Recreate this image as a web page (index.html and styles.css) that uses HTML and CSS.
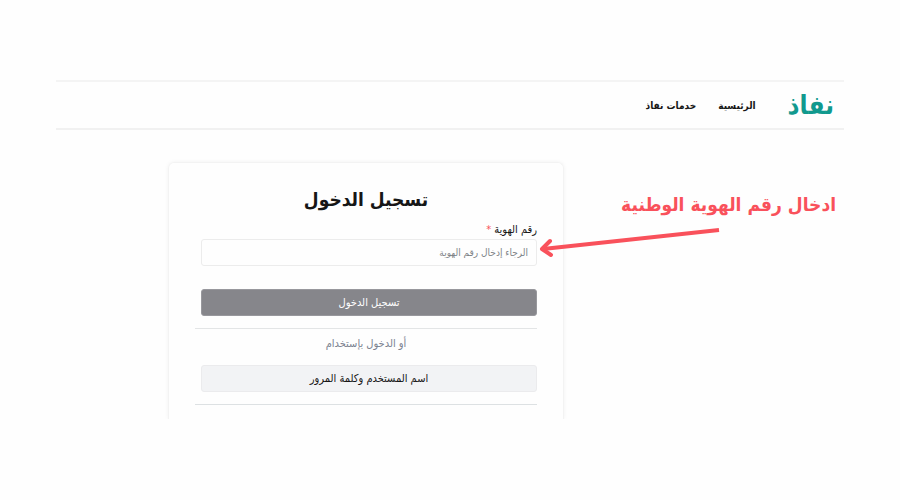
FILE: index.html
```html
<!DOCTYPE html>
<html lang="ar" dir="rtl">

<head>
    <meta charset="UTF-8">
    <meta name="viewport" content="width=device-width, initial-scale=1.0">
    <title>تسجيل الدخول</title>
    <link rel="stylesheet" href="styles.css">
</head>

<body>
    <header class="navbar">
        <a class="logo" href="#">نفاذ</a>
        <nav class="nav-links">
            <a href="#">الرئيسية</a>
            <a href="#">خدمات نفاذ</a>
        </nav>
    </header>

    <main class="content">
        <aside class="hint">
            <p class="hint-text">ادخال رقم الهوية الوطنية</p>
            <svg class="hint-arrow" width="184" height="34" viewBox="0 0 184 34" fill="none" stroke="#f9515b" stroke-width="4" aria-hidden="true">
                <path d="M181 4 L5 23" />
                <path d="M12 15 L4 23 L13 29" stroke-linecap="round" stroke-linejoin="round" />
            </svg>
        </aside>

        <section class="card">
            <h1>تسجيل الدخول</h1>
            <form class="login-form">
                <label for="idNumber">رقم الهوية <span class="required">*</span></label>
                <input type="text" id="idNumber" name="idNumber" placeholder="الرجاء إدخال رقم الهوية">
                <button type="submit" class="btn btn-login">تسجيل الدخول</button>
            </form>
            <div class="other-login">
                <p>أو الدخول بإستخدام</p>
                <button type="button" class="btn btn-other">اسم المستخدم وكلمة المرور</button>
            </div>
        </section>
    </main>
</body>

</html>
```

FILE: styles.css
```css
* {
    box-sizing: border-box;
}

body {
    margin: 0;
    padding: 80px 56px;
    background-color: #fefefe;
    color: #161616;
    font-family: "DejaVu Sans Condensed", "DejaVu Sans", sans-serif;
    font-size: 11px;
}

.navbar {
    display: flex;
    align-items: center;
    gap: 32px;
    height: 50px;
    padding: 0 10px;
    border-top: 2px solid #f4f4f4;
    border-bottom: 2px solid #f1f1f1;
}

.navbar a {
    text-decoration: none;
}

.logo {
    color: #11998e;
    font-size: 26px;
    font-weight: bold;
}

.nav-links {
    display: flex;
    gap: 22px;
}

.nav-links a {
    color: #161616;
    font-size: 10px;
    font-weight: bold;
}

.content {
    display: grid;
    grid-template-columns: 280fr 396fr 112fr;
    margin-top: 32px;
}

.card {
    padding: 20px 26px 14px;
    border: 1px solid #f3f3f3;
    border-bottom: none;
    border-radius: 6px 6px 0 0;
    box-shadow: 0 0 4px #f3f3f3;
    clip-path: inset(-6px -6px 0 -6px);
}

.card h1 {
    margin: 0 0 6px;
    font-size: 19px;
    line-height: 32px;
    text-align: center;
}

.login-form {
    display: flex;
    flex-direction: column;
    padding-left: 6px;
}

.login-form label {
    line-height: 18px;
}

.required {
    color: #f9515b;
}

.login-form input {
    height: 27px;
    margin-bottom: 23px;
    padding: 0 8px;
    border: 1px solid #ececec;
    border-radius: 3px;
    background-color: #fefefe;
    font-family: inherit;
    font-size: 10px;
}

.login-form input::placeholder {
    color: #808488;
    opacity: 1;
}

.btn {
    height: 27px;
    padding: 0;
    border-radius: 3px;
    font-family: inherit;
    font-size: 11px;
    cursor: pointer;
}

.btn-login {
    border: 1px solid #98989d;
    background-color: #86868b;
    color: #fff;
}

/* Alternative sign in, between two rules */
.other-login {
    display: flex;
    flex-direction: column;
    margin-top: 12px;
    padding-bottom: 12px;
    border-top: 1px solid #e3e5e6;
    border-bottom: 1px solid #dde1e3;
}

.other-login p {
    margin: 6px 0 12px;
    color: #7b8290;
    line-height: 18px;
    text-align: center;
}

.btn-other {
    margin-left: 6px;
    border: 1px solid #ebebed;
    background-color: #f2f3f5;
    color: #161616;
}

.hint {
    position: relative;
    padding: 28px 8px 0;
}

.hint-text {
    margin: 0;
    color: #f9515b;
    font-size: 19px;
    font-weight: bold;
    line-height: 28px;
    white-space: nowrap;
}

/* The arrow reaches over the card edge to the id field */
.hint-arrow {
    position: absolute;
    left: -26px;
    top: 64px;
    z-index: 1;
}
```
